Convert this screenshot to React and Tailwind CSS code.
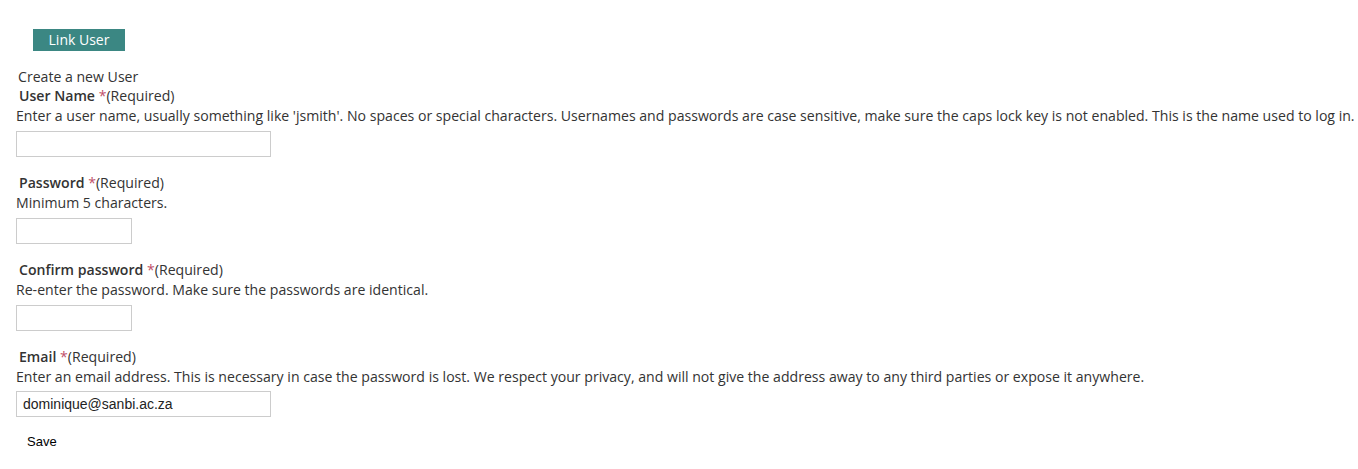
export default function App() {
  const font = { fontFamily: '"Open Sans", sans-serif' };

  const Label = ({ children }) => (
    <div className="pl-[3px] leading-[20px]">
      <span className="font-semibold">{children}</span>{" "}
      <span className="text-[#c0506a]">*</span>(Required)
    </div>
  );

  return (
    <div className="min-h-screen bg-white text-[14.1px] text-[#333]" style={font}>
      <div className="pt-[29px] pl-[33px]">
        <button className="h-[22px] w-[92px] bg-[#3b8783] text-[14px] leading-[22px] text-white">
          Link User
        </button>
      </div>

      <div className="pl-[16px]">
        <div className="mt-[16px] pl-[2px] leading-[19px]">Create a new User</div>

        <Label>User Name</Label>
        <div className="leading-[20px]">
          Enter a user name, usually something like 'jsmith'. No spaces or special characters. Usernames and passwords are case sensitive, make sure the caps lock key is not enabled. This is the name used to log in.
        </div>
        <input className="mt-[5px] block h-[26px] w-[255px] border border-[#ccc]" type="text" />

        <div className="mt-[16px]">
          <Label>Password</Label>
        </div>
        <div className="leading-[20px]">Minimum 5 characters.</div>
        <input className="mt-[5px] block h-[26px] w-[116px] border border-[#ccc]" type="password" />

        <div className="mt-[16px]">
          <Label>Confirm password</Label>
        </div>
        <div className="leading-[20px]">Re-enter the password. Make sure the passwords are identical.</div>
        <input className="mt-[5px] block h-[26px] w-[116px] border border-[#ccc]" type="password" />

        <div className="mt-[16px]">
          <Label>Email</Label>
        </div>
        <div className="leading-[20px]">
          Enter an email address. This is necessary in case the password is lost. We respect your privacy, and will not give the address away to any third parties or expose it anywhere.
        </div>
        <input
          className="mt-[4px] block h-[26px] w-[255px] border border-[#ccc] px-[6px] text-[14px] text-[#222]"
          style={{ fontFamily: '"Liberation Sans", Arial, sans-serif' }}
          type="text"
          defaultValue="dominique@sanbi.ac.za"
        />

        <button
          className="mt-[17px] ml-[11px] text-[13px] leading-[16px] text-black"
          style={{ fontFamily: '"Liberation Sans", Arial, sans-serif' }}
        >
          Save
        </button>
      </div>
    </div>
  );
}
